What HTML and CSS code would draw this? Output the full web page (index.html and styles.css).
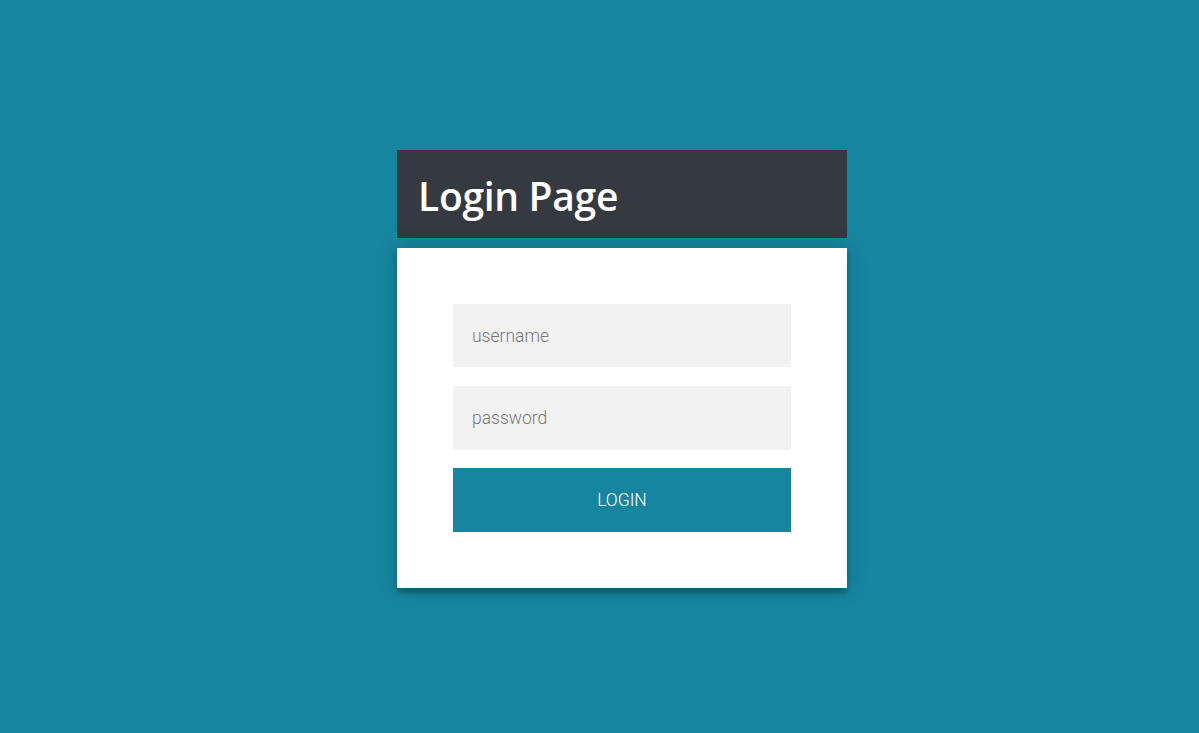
FILE: index.html
```html
<!DOCTYPE html>
<html>
<head>
<meta charset="utf-8">
<link rel="stylesheet" href="styles.css">
</head>
<body>
<div class="page">
  <div class="login">
    <div class="login-header"><h1 class="title">Login Page</h1></div>
    <form class="form">
      <input class="field" type="text" placeholder="username">
      <input class="field" type="password" placeholder="password">
      <button class="btn" type="button">LOGIN</button>
    </form>
  </div>
</div>
</body>
</html>
```

FILE: styles.css
```css
html, body {
  margin: 0;
  padding: 0;
  height: 100%;
  background: #1686a0;
}
.page {
  display: flex;
  justify-content: center;
  padding-top: 150px;
  padding-left: 45px;
}
.login {
  width: 450px;
  display: flex;
  flex-direction: column;
  gap: 10px;
}
.login-header {
  background: #343a40;
  height: 88px;
  display: flex;
  align-items: center;
  padding-left: 21px;
  box-sizing: border-box;
}
.title {
  margin: 0;
  color: #fff;
  font-family: "Open Sans", "Noto Sans", sans-serif;
  font-weight: 600;
  font-size: 39px;
  letter-spacing: -0.3px;
  line-height: 1;
  padding-top: 2px;
}
.form {
  background: #fff;
  padding: 56px;
  display: flex;
  flex-direction: column;
  box-shadow: 0 0 20px 0 rgba(0,0,0,0.2), 0 5px 5px 0 rgba(0,0,0,0.24);
}
.field {
  font-family: Roboto, sans-serif;
  font-weight: 300;
  font-size: 17.5px;
  background: #f2f2f2;
  border: 0;
  outline: 0;
  height: 63px;
  padding: 0 19px;
  margin: 0 0 19px;
  box-sizing: border-box;
  width: 100%;
  color: #333;
}
.field + .field { height: 64px; margin-bottom: 18px; }
.field::placeholder { color: #777; }
.btn {
  font-family: Roboto, sans-serif;
  font-weight: 300;
  font-size: 17.5px;
  text-transform: uppercase;
  background: #1686a0;
  color: #fff;
  border: 0;
  height: 64px;
  width: 100%;
  padding: 0;
  cursor: pointer;
}
```
